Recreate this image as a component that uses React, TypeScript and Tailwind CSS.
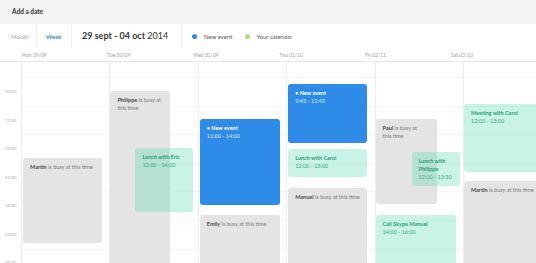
import React from 'react';

type Ev = {
  kind: 'busy' | 'teal' | 'blue';
  top: number;
  h: number;
  left: number;
  w: number;
  title: string;
  lines?: string[];
  time?: string;
};

type Col = { day: string; events: Ev[] };

const COLS: Col[] = [
  {
    day: 'Mon 29/09',
    events: [{ kind: 'busy', top: 96, h: 85, left: 1, w: 79, title: 'Martin', lines: [' is busy at this time'] }],
  },
  {
    day: 'Tue 30/09',
    events: [
      { kind: 'busy', top: 29, h: 220, left: 0, w: 60, title: 'Philippe', lines: [' is busy at', 'this time'] },
      { kind: 'teal', top: 86, h: 64, left: 25, w: 58, title: 'Lunch with Eric', time: '12:00 - 14:00' },
    ],
  },
  {
    day: 'Wed 31/09',
    events: [
      { kind: 'blue', top: 57, h: 86, left: 1, w: 80, title: '• New event', time: '11:00 - 14:00' },
      { kind: 'busy', top: 153, h: 100, left: 1, w: 80, title: 'Emily', lines: [' is busy at this time'] },
    ],
  },
  {
    day: 'Thu 01/10',
    events: [
      { kind: 'blue', top: 22, h: 59, left: 1, w: 79, title: '• New event', time: '9:45 - 11:45' },
      { kind: 'teal', top: 87, h: 28, left: 1, w: 79, title: 'Lunch with Carol', time: '12:00 - 13:00' },
      { kind: 'busy', top: 126, h: 120, left: 1, w: 79, title: 'Manuel', lines: [' is busy at this time'] },
    ],
  },
  {
    day: 'Fri 02/11',
    events: [
      { kind: 'busy', top: 57, h: 85, left: 0, w: 61, title: 'Paul', lines: [' is busy at', 'this time'] },
      { kind: 'teal', top: 90, h: 34, left: 36, w: 48, title: 'Lunch with', lines: ['Philippe'], time: '12:00 - 13:30' },
      { kind: 'teal', top: 153, h: 100, left: 0, w: 80, title: 'Call Skype Manuel', time: '14:00 - 16:00' },
    ],
  },
  {
    day: 'Sat 03/10',
    events: [
      { kind: 'teal', top: 42, h: 68, left: 0, w: 80, title: 'Meeting with Carol', time: '12:00 - 13:00' },
      { kind: 'busy', top: 119, h: 120, left: 0, w: 80, title: 'Martin', lines: [' is busy at this time'] },
    ],
  },
];

const HOURS = ['10:00', '11:00', '12:00', '13:00', '14:00', '15:00', '16:00'];

const EventBox = ({ ev }: { ev: Ev }) => {
  const base = 'absolute rounded-[3px] px-[7px] pt-[5px] text-[5.5px] leading-[8px]';
  if (ev.kind === 'busy') {
    return (
      <div className={`${base} bg-[#e4e4e4] text-[#7a7a7a]`} style={{ top: ev.top, height: ev.h, left: ev.left, width: ev.w }}>
        <span className="font-bold text-[#4a4a4a]">{ev.title}</span>
        {ev.lines?.[0]}
        {ev.lines?.slice(1).map((l) => (
          <div key={l}>{l}</div>
        ))}
      </div>
    );
  }
  if (ev.kind === 'blue') {
    return (
      <div className={`${base} bg-[#2f8be8] text-white`} style={{ top: ev.top, height: ev.h, left: ev.left, width: ev.w }}>
        <div className="font-bold">{ev.title}</div>
        <div className="text-[#dcebfb]">{ev.time}</div>
      </div>
    );
  }
  return (
    <div className={`${base} bg-[rgba(72,215,172,0.3)] text-[#3aa985]`} style={{ top: ev.top, height: ev.h, left: ev.left, width: ev.w }}>
      <div className="font-bold text-[#27a07a]">{ev.title}</div>
      {ev.lines?.map((l) => (
        <div key={l} className="font-bold text-[#27a07a]">{l}</div>
      ))}
      <div>{ev.time}</div>
    </div>
  );
};

export default function App() {
  return (
    <div className="w-[536px] h-[263px] overflow-hidden bg-white flex flex-col" style={{ fontFamily: 'Lato, "Open Sans", sans-serif' }}>
      {/* top bar */}
      <div className="h-6 shrink-0 bg-[#f4f4f4] flex items-center pl-3 text-[6.5px] font-bold text-[#333]">Add a date</div>

      {/* toolbar */}
      <div className="h-6 shrink-0 flex items-stretch text-[6px]">
        <div className="w-[37px] border-r border-[#efefef] flex items-center pl-[11px] text-[#a0a0a0]">Mouth</div>
        <div className="w-[35px] border-r border-[#efefef] flex items-center pl-[9px] font-bold text-[#2f8be8]">Week</div>
        <div className="w-[110px] border-r border-[#efefef] flex items-center pl-[10px] text-[9px] text-[#333]">
          <span className="font-bold">29 sept - 04 oct</span>
          <span>&nbsp;2014</span>
        </div>
        <div className="flex items-center pl-[10px] text-[#555]">
          <span className="w-[5px] h-[5px] rounded-full bg-[#2f8be8]" />
          <span className="ml-[7px]">New event</span>
          <span className="ml-[12px] w-[5px] h-[5px] rounded-full bg-[#a8df7f]" />
          <span className="ml-[7px]">Your calendar</span>
        </div>
      </div>

      {/* day headers */}
      <div className="h-[14px] shrink-0 flex items-end pb-[3px] border-b border-[#e8e8e8] text-[5px] leading-[6px] text-[#a0a0a0]">
        <div className="w-[21px]" />
        {COLS.map((c) => (
          <div key={c.day} className="w-[88.4px] pl-[1px]">{c.day}</div>
        ))}
      </div>

      {/* body */}
      <div className="flex-1 flex overflow-hidden">
        <div className="w-[21px] shrink-0 pt-[16px] text-[4.5px] text-[#aaa]">
          {HOURS.map((h) => (
            <div key={h} className="h-[28.6px] flex items-center justify-center">{h}</div>
          ))}
        </div>
        {COLS.map((c) => (
          <div key={c.day} className="relative w-[88.4px] shrink-0 border-l border-[#ededed]">
            <div className="h-[15px]" />
            {HOURS.map((h) => (
              <div key={h} className="h-[28.6px] border-t border-[#f4f4f4]" />
            ))}
            {c.events.map((ev, i) => (
              <EventBox key={i} ev={ev} />
            ))}
          </div>
        ))}
      </div>
    </div>
  );
}
